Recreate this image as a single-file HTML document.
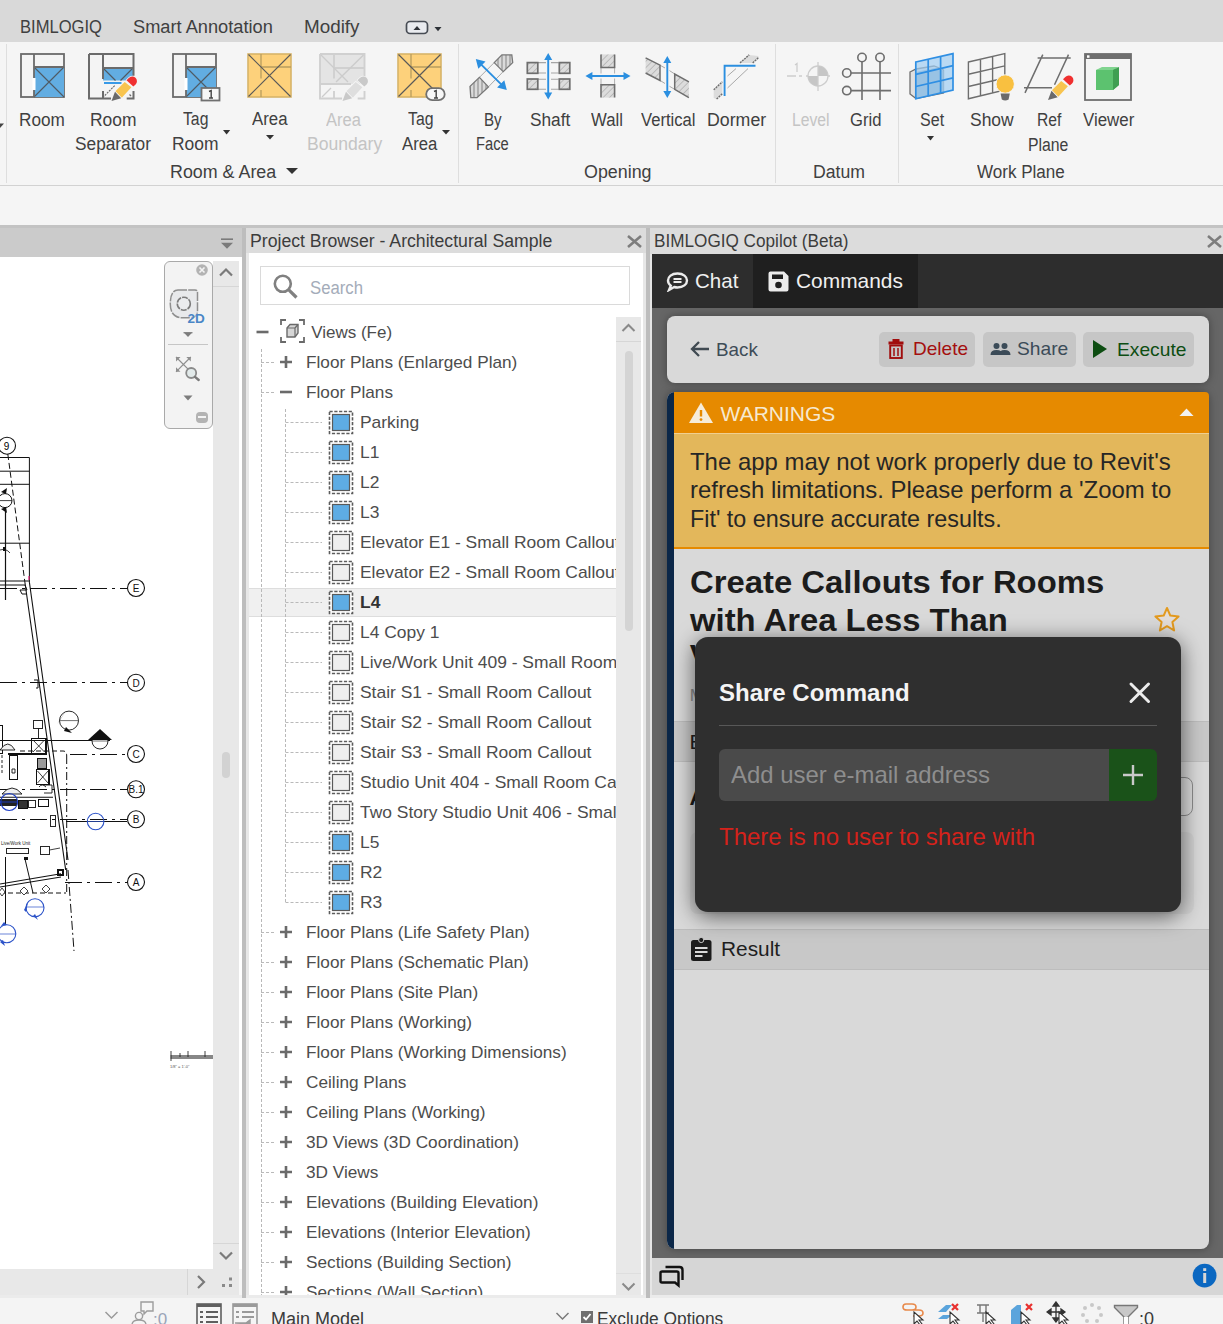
<!DOCTYPE html><html><head><meta charset="utf-8"><style>html,body{margin:0;padding:0}body{width:1223px;height:1324px;position:relative;overflow:hidden;background:#f5f5f5;font-family:'Liberation Sans',sans-serif}svg{display:block}</style></head><body><div style="position:absolute;left:0px;top:0px;width:1223px;height:42px;background:#d9d9d9;"></div>
<div style="position:absolute;left:19.60px;top:18.46px;font-size:18px;line-height:18px;color:#404040;font-weight:normal;white-space:nowrap;transform:scaleX(0.9212);transform-origin:left 0;">BIMLOGIQ</div>
<div style="position:absolute;left:132.50px;top:18.46px;font-size:18px;line-height:18px;color:#404040;font-weight:normal;white-space:nowrap;transform:scaleX(1.0124);transform-origin:left 0;">Smart Annotation</div>
<div style="position:absolute;left:303.50px;top:18.46px;font-size:18px;line-height:18px;color:#404040;font-weight:normal;white-space:nowrap;transform:scaleX(1.0469);transform-origin:left 0;">Modify</div>
<svg style="position:absolute;left:404px;top:19px;" width="40" height="18" viewBox="0 0 40 18"><rect x="2.5" y="2.5" width="21" height="12" rx="3.5" fill="#e9ebef" stroke="#474c54" stroke-width="1.7"/><path d="M9.5 11 L13 7 L16.5 11 Z" fill="#2e3238"/><path d="M30.5 8 L37.5 8 L34 12.2 Z" fill="#2e3238"/></svg>
<div style="position:absolute;left:0px;top:42px;width:1223px;height:143px;background:#f5f5f5;"></div>
<div style="position:absolute;left:0px;top:184.5px;width:1223px;height:1.5px;background:#d2d2d2;"></div>
<div style="position:absolute;left:6px;top:44px;width:1px;height:139px;background:#dedede;"></div>
<div style="position:absolute;left:458px;top:44px;width:1px;height:139px;background:#dedede;"></div>
<div style="position:absolute;left:774.5px;top:44px;width:1px;height:139px;background:#dedede;"></div>
<div style="position:absolute;left:898px;top:44px;width:1px;height:139px;background:#dedede;"></div>
<div style="position:absolute;left:19.40px;top:110.76px;font-size:18px;line-height:18px;color:#404040;font-weight:normal;white-space:nowrap;transform:scaleX(0.9539);transform-origin:left 0;">Room</div>
<div style="position:absolute;left:90.00px;top:110.76px;font-size:18px;line-height:18px;color:#404040;font-weight:normal;white-space:nowrap;transform:scaleX(0.9684);transform-origin:left 0;">Room</div>
<div style="position:absolute;left:74.60px;top:135.36px;font-size:18px;line-height:18px;color:#404040;font-weight:normal;white-space:nowrap;transform:scaleX(0.9600);transform-origin:left 0;">Separator</div>
<div style="position:absolute;left:183.00px;top:110.26px;font-size:18px;line-height:18px;color:#404040;font-weight:normal;white-space:nowrap;transform:scaleX(0.8749);transform-origin:left 0;">Tag</div>
<div style="position:absolute;left:172.00px;top:134.56px;font-size:18px;line-height:18px;color:#404040;font-weight:normal;white-space:nowrap;transform:scaleX(0.9684);transform-origin:left 0;">Room</div>
<div style="position:absolute;left:252.00px;top:110.26px;font-size:18px;line-height:18px;color:#404040;font-weight:normal;white-space:nowrap;transform:scaleX(0.9334);transform-origin:left 0;">Area</div>
<div style="position:absolute;left:326.40px;top:110.56px;font-size:18px;line-height:18px;color:#c4c4c4;font-weight:normal;white-space:nowrap;transform:scaleX(0.9177);transform-origin:left 0;">Area</div>
<div style="position:absolute;left:306.50px;top:135.26px;font-size:18px;line-height:18px;color:#c4c4c4;font-weight:normal;white-space:nowrap;transform:scaleX(0.9758);transform-origin:left 0;">Boundary</div>
<div style="position:absolute;left:407.50px;top:110.26px;font-size:18px;line-height:18px;color:#404040;font-weight:normal;white-space:nowrap;transform:scaleX(0.8784);transform-origin:left 0;">Tag</div>
<div style="position:absolute;left:402.20px;top:134.56px;font-size:18px;line-height:18px;color:#404040;font-weight:normal;white-space:nowrap;transform:scaleX(0.9282);transform-origin:left 0;">Area</div>
<div style="position:absolute;left:170.20px;top:163.26px;font-size:18px;line-height:18px;color:#404040;font-weight:normal;white-space:nowrap;transform:scaleX(0.9919);transform-origin:left 0;">Room &amp; Area</div>
<div style="position:absolute;left:484.20px;top:110.76px;font-size:18px;line-height:18px;color:#404040;font-weight:normal;white-space:nowrap;transform:scaleX(0.8422);transform-origin:left 0;">By</div>
<div style="position:absolute;left:476.00px;top:135.26px;font-size:18px;line-height:18px;color:#404040;font-weight:normal;white-space:nowrap;transform:scaleX(0.8169);transform-origin:left 0;">Face</div>
<div style="position:absolute;left:529.60px;top:110.76px;font-size:18px;line-height:18px;color:#404040;font-weight:normal;white-space:nowrap;transform:scaleX(0.9588);transform-origin:left 0;">Shaft</div>
<div style="position:absolute;left:591.40px;top:110.76px;font-size:18px;line-height:18px;color:#404040;font-weight:normal;white-space:nowrap;transform:scaleX(0.9288);transform-origin:left 0;">Wall</div>
<div style="position:absolute;left:640.80px;top:110.76px;font-size:18px;line-height:18px;color:#404040;font-weight:normal;white-space:nowrap;transform:scaleX(0.9232);transform-origin:left 0;">Vertical</div>
<div style="position:absolute;left:707.20px;top:110.76px;font-size:18px;line-height:18px;color:#404040;font-weight:normal;white-space:nowrap;transform:scaleX(0.9864);transform-origin:left 0;">Dormer</div>
<div style="position:absolute;left:583.60px;top:163.46px;font-size:18px;line-height:18px;color:#404040;font-weight:normal;white-space:nowrap;transform:scaleX(0.9917);transform-origin:left 0;">Opening</div>
<div style="position:absolute;left:791.60px;top:110.76px;font-size:18px;line-height:18px;color:#c4c4c4;font-weight:normal;white-space:nowrap;transform:scaleX(0.8738);transform-origin:left 0;">Level</div>
<div style="position:absolute;left:849.80px;top:110.76px;font-size:18px;line-height:18px;color:#404040;font-weight:normal;white-space:nowrap;transform:scaleX(0.9231);transform-origin:left 0;">Grid</div>
<div style="position:absolute;left:812.50px;top:163.46px;font-size:18px;line-height:18px;color:#404040;font-weight:normal;white-space:nowrap;transform:scaleX(0.9808);transform-origin:left 0;">Datum</div>
<div style="position:absolute;left:919.60px;top:110.76px;font-size:18px;line-height:18px;color:#404040;font-weight:normal;white-space:nowrap;transform:scaleX(0.8916);transform-origin:left 0;">Set</div>
<div style="position:absolute;left:970.30px;top:110.76px;font-size:18px;line-height:18px;color:#404040;font-weight:normal;white-space:nowrap;transform:scaleX(0.9704);transform-origin:left 0;">Show</div>
<div style="position:absolute;left:1036.50px;top:110.76px;font-size:18px;line-height:18px;color:#404040;font-weight:normal;white-space:nowrap;transform:scaleX(0.8709);transform-origin:left 0;">Ref</div>
<div style="position:absolute;left:1028.00px;top:135.76px;font-size:18px;line-height:18px;color:#404040;font-weight:normal;white-space:nowrap;transform:scaleX(0.8774);transform-origin:left 0;">Plane</div>
<div style="position:absolute;left:1082.50px;top:110.76px;font-size:18px;line-height:18px;color:#404040;font-weight:normal;white-space:nowrap;transform:scaleX(0.9378);transform-origin:left 0;">Viewer</div>
<div style="position:absolute;left:976.70px;top:163.06px;font-size:18px;line-height:18px;color:#404040;font-weight:normal;white-space:nowrap;transform:scaleX(0.9469);transform-origin:left 0;">Work Plane</div>
<svg style="position:absolute;left:222px;top:129px;" width="9" height="6" viewBox="0 0 9 6"><path d="M1 1 L8.2 1 L4.6 5.5 Z" fill="#333"/></svg>
<svg style="position:absolute;left:265px;top:134px;" width="10" height="6" viewBox="0 0 10 6"><path d="M1 1 L9.0 1 L5.0 5.5 Z" fill="#333"/></svg>
<svg style="position:absolute;left:441px;top:129px;" width="10" height="6" viewBox="0 0 10 6"><path d="M1 1 L9.0 1 L5.0 5.5 Z" fill="#333"/></svg>
<svg style="position:absolute;left:285px;top:167px;" width="14" height="8" viewBox="0 0 14 8"><path d="M1 1 L13.0 1 L7.0 7.0 Z" fill="#333"/></svg>
<svg style="position:absolute;left:926px;top:135px;" width="9" height="6" viewBox="0 0 9 6"><path d="M1 1 L8.0 1 L4.5 5.5 Z" fill="#333"/></svg>
<div style="position:absolute;left:0px;top:186px;width:1223px;height:39px;background:#f5f5f5;"></div>
<svg style="position:absolute;left:20px;top:53px;" width="46" height="46" viewBox="0 0 46 46"><rect x="1" y="1" width="43" height="43" fill="#f4f4f4" stroke="#6b6b6b" stroke-width="1.8"/><rect x="14" y="14" width="30" height="30" fill="#62ade2"/><path d="M14 14 L44 44 M44 14 L14 44" stroke="#4f5a63" stroke-width="1.1"/><path d="M14 1 V44 M14 14 H44" stroke="#6b6b6b" stroke-width="1.8"/><rect x="12.5" y="25" width="3" height="12" fill="#ffffff"/></svg>
<svg style="position:absolute;left:88px;top:53px;" width="50" height="50" viewBox="0 0 50 50"><rect x="1" y="1" width="44.5" height="44.5" fill="#f4f4f4"/><rect x="15" y="15" width="30" height="12.5" fill="#62ade2"/><path d="M15 15 L27.5 27.5 M45 15 L32.5 27.5" stroke="#4f5a63" stroke-width="1.2"/><path d="M1 1 H45.5 V22.7 M45.5 38 V45.5 H38.7 M23 45.5 H1 V1 M15 1 V26 M15 38 V45.5 M15 15 H45.5" stroke="#6b6b6b" stroke-width="2" fill="none"/><path d="M16 30 H33.5" stroke="#2f95e6" stroke-width="1.9"/><path d="M26.7 32.6 L15 44.3" stroke="#6a6a6a" stroke-width="1.1" stroke-dasharray="2 1"/><path d="M41.5 41.5 L43 43" stroke="#6a6a6a" stroke-width="1.2"/><path d="M27.4 38.2 L36.7 28.9 L43.4 34.3 L33.8 44.8 Z" fill="#f8c44f" stroke="#f5f5f5" stroke-width="1.6" paint-order="stroke"/><path d="M38.5 27.2 L40.8 24.9 A4.6 4.6 0 0 1 47.6 31.5 L45.3 33.6 Z" fill="#f03030" stroke="#f5f5f5" stroke-width="1.4" paint-order="stroke"/><path d="M27 38.8 L33.2 45.3 L23.5 48 Z" fill="#6a6a6a" stroke="#f5f5f5" stroke-width="1.2" paint-order="stroke"/></svg>
<svg style="position:absolute;left:172px;top:53px;" width="50" height="49" viewBox="0 0 50 49"><rect x="1" y="1" width="43" height="43" fill="#f4f4f4" stroke="#6b6b6b" stroke-width="1.8"/><rect x="14" y="14" width="30" height="30" fill="#62ade2"/><path d="M14 14 L44 44 M44 14 L14 44" stroke="#4f5a63" stroke-width="1.1"/><path d="M14 1 V44 M14 14 H44" stroke="#6b6b6b" stroke-width="1.8"/><rect x="12.5" y="25" width="3" height="12" fill="#ffffff"/><rect x="29.5" y="35" width="18" height="12.5" fill="#f7f7f7" stroke="#707070" stroke-width="1.8"/><path d="M37 38.5 L39.2 37.5 V45 M37 45 H41" stroke="#444" stroke-width="1.4" fill="none"/></svg>
<svg style="position:absolute;left:247px;top:53px;" width="46" height="46" viewBox="0 0 46 46"><rect x="1" y="1" width="43" height="43" fill="#fdd17b" stroke="#d8b56a" stroke-width="1.6"/><path d="M14 1 V25.5 M14 37 V44 M14 14 H44" stroke="#b89d5f" stroke-width="1.3"/><path d="M1.5 1.5 L43.5 43.5 M43.5 1.5 L1.5 43.5" stroke="#5a5a5a" stroke-width="1.15"/></svg>
<svg style="position:absolute;left:319px;top:53px;" width="50" height="50" viewBox="0 0 50 50"><rect x="1" y="1" width="44.5" height="30" fill="#e4e4e4"/><rect x="1" y="31" width="44.5" height="14.5" fill="#f4f4f4"/><path d="M1 1 H45.5 V27 M45.5 38 V45.5 H38.7 M23 45.5 H1 V1 M15 1 V25.5 M15 15 H45.5 M1 31 H32 M15 38 V45.5" stroke="#d0d0d0" stroke-width="1.9" fill="none"/><path d="M2 2 L29 29 M44.5 2 L17 29" stroke="#cccccc" stroke-width="1.4"/><path d="M12 35 L3 44" stroke="#cccccc" stroke-width="1.3"/><path d="M27.4 38.2 L36.7 28.9 L43.4 34.3 L33.8 44.8 Z" fill="#dedede" stroke="#f5f5f5" stroke-width="1.6" paint-order="stroke"/><path d="M38.5 27.2 L40.8 24.9 A4.6 4.6 0 0 1 47.6 31.5 L45.3 33.6 Z" fill="#c9c9c9" stroke="#f5f5f5" stroke-width="1.4" paint-order="stroke"/><path d="M27 38.8 L33.2 45.3 L23.5 48 Z" fill="#c9c9c9" stroke="#f5f5f5" stroke-width="1.2" paint-order="stroke"/></svg>
<svg style="position:absolute;left:397px;top:53px;" width="50" height="49" viewBox="0 0 50 49"><rect x="1" y="1" width="43" height="43" fill="#fdd17b" stroke="#d8b56a" stroke-width="1.6"/><path d="M14 1 V25.5 M14 37 V44 M14 14 H44" stroke="#b89d5f" stroke-width="1.3"/><path d="M1.5 1.5 L43.5 43.5 M43.5 1.5 L1.5 43.5" stroke="#5a5a5a" stroke-width="1.15"/><rect x="29.2" y="35.2" width="18.5" height="12" rx="6" fill="#f7f7f7" stroke="#707070" stroke-width="1.8"/><path d="M37 38.5 L39.2 37.5 V45 M37 45 H41" stroke="#444" stroke-width="1.4" fill="none"/></svg>
<svg style="position:absolute;left:466px;top:52px;" width="50" height="49" viewBox="466 52 50 49"><defs><pattern id="hv" width="4" height="4" patternUnits="userSpaceOnUse"><rect width="4" height="4" fill="#dadada"/><path d="M2 0 V4" stroke="#8c8c8c" stroke-width="1.1"/></pattern><pattern id="hd" width="4.5" height="4.5" patternUnits="userSpaceOnUse" patternTransform="rotate(45)"><rect width="4.5" height="4.5" fill="#dcdcdc"/><path d="M0 0 V4.5" stroke="#9a9a9a" stroke-width="1"/></pattern></defs><path d="M479.4 77.4 L494.2 62.6 M488.4 86.9 L503.2 71.6" stroke="#a8a8a8" stroke-width="1"/><path d="M470 86.4 L479.4 77.4 L488.4 86.9 L477 97.7 L470.8 97.7 Z" fill="url(#hv)" stroke="#777" stroke-width="1.3"/><path d="M494.2 62.6 L501.9 54.9 L511.8 54.9 L512.7 62.6 L503.2 71.6 Z" fill="url(#hv)" stroke="#777" stroke-width="1.3"/><path d="M478.5 61.8 L504 87.2" stroke="#2b8fe0" stroke-width="1.9"/><path d="M475.8 59 L485.5 61.5 L478.3 68.7 Z M506.8 90 L497.1 87.5 L504.3 80.3 Z" fill="#2b8fe0"/></svg>
<svg style="position:absolute;left:524px;top:51px;" width="48" height="51" viewBox="524 51 48 51"><defs><pattern id="hv" width="4" height="4" patternUnits="userSpaceOnUse"><rect width="4" height="4" fill="#dadada"/><path d="M2 0 V4" stroke="#8c8c8c" stroke-width="1.1"/></pattern><pattern id="hd" width="4.5" height="4.5" patternUnits="userSpaceOnUse" patternTransform="rotate(45)"><rect width="4.5" height="4.5" fill="#dcdcdc"/><path d="M0 0 V4.5" stroke="#9a9a9a" stroke-width="1"/></pattern></defs><path d="M538 62.6 H546 M551 62.6 H558.6 M538 73 H546 M551 73 H558.6 M538 79.3 H546 M551 79.3 H558.6 M538 89.2 H546 M551 89.2 H558.6" stroke="#a5a5a5" stroke-width="1.1"/><rect x="527.3" y="62.6" width="10.5" height="10.7" fill="url(#hd)" stroke="#6e6e6e" stroke-width="1.7"/><rect x="559.3" y="62.6" width="10.5" height="10.7" fill="url(#hd)" stroke="#6e6e6e" stroke-width="1.7"/><rect x="527.3" y="79" width="10.5" height="10.3" fill="url(#hd)" stroke="#6e6e6e" stroke-width="1.7"/><rect x="559.3" y="79" width="10.5" height="10.3" fill="url(#hd)" stroke="#6e6e6e" stroke-width="1.7"/><path d="M548.2 58 V95" stroke="#2b8fe0" stroke-width="1.9"/><path d="M548.2 53 L552.2 60 L544.2 60 Z M548.2 99.5 L552.2 92.5 L544.2 92.5 Z" fill="#2b8fe0"/></svg>
<svg style="position:absolute;left:583px;top:52px;" width="49" height="48" viewBox="583 52 49 48"><defs><pattern id="hv" width="4" height="4" patternUnits="userSpaceOnUse"><rect width="4" height="4" fill="#dadada"/><path d="M2 0 V4" stroke="#8c8c8c" stroke-width="1.1"/></pattern><pattern id="hd" width="4.5" height="4.5" patternUnits="userSpaceOnUse" patternTransform="rotate(45)"><rect width="4.5" height="4.5" fill="#dcdcdc"/><path d="M0 0 V4.5" stroke="#9a9a9a" stroke-width="1"/></pattern></defs><path d="M601 67.5 V84.8 M614.6 67.5 V84.8" stroke="#b0b0b0" stroke-width="1"/><rect x="601" y="54.4" width="13.6" height="13.1" fill="url(#hd)"/><path d="M601 54.4 V67.5 H614.6 V54.4" stroke="#6e6e6e" stroke-width="1.6" fill="none"/><rect x="601" y="84.8" width="13.6" height="12.8" fill="url(#hd)"/><path d="M601 97.6 V84.8 H614.6 V97.6" stroke="#6e6e6e" stroke-width="1.6" fill="none"/><rect x="596" y="73.5" width="24" height="5" fill="#f5f5f5"/><path d="M590 76 H626" stroke="#2b8fe0" stroke-width="1.9"/><path d="M585.4 76 L592.4 72 L592.4 80 Z M630.5 76 L623.5 72 L623.5 80 Z" fill="#2b8fe0"/></svg>
<svg style="position:absolute;left:643px;top:53px;" width="48" height="48" viewBox="643 53 48 48"><defs><pattern id="hv" width="4" height="4" patternUnits="userSpaceOnUse"><rect width="4" height="4" fill="#dadada"/><path d="M2 0 V4" stroke="#8c8c8c" stroke-width="1.1"/></pattern><pattern id="hd" width="4.5" height="4.5" patternUnits="userSpaceOnUse" patternTransform="rotate(45)"><rect width="4.5" height="4.5" fill="#dcdcdc"/><path d="M0 0 V4.5" stroke="#9a9a9a" stroke-width="1"/></pattern></defs><path d="M660 65.2 L665 68 M669.5 70.6 L674.7 74 M660 80.4 L665 83.5 M669.5 86.3 L674.7 89.3" stroke="#a8a8a8" stroke-width="1"/><path d="M645.6 57.9 L660 65.2 L660 80.4 L645.6 73 Z" fill="url(#hd)"/><path d="M645.6 57.9 L660 65.2 L660 80.4 L645.6 73" stroke="#6e6e6e" stroke-width="1.5" fill="none"/><path d="M674.7 74 L688.9 81.9 L688.9 97.6 L674.7 89.3 Z" fill="url(#hd)"/><path d="M688.9 81.9 L674.7 74 L674.7 89.3 L688.9 97.6" stroke="#6e6e6e" stroke-width="1.5" fill="none"/><path d="M667.3 60 V94" stroke="#2b8fe0" stroke-width="1.9"/><path d="M667.3 55.9 L671.3 62.9 L663.3 62.9 Z M667.3 98 L671.3 91 L663.3 91 Z" fill="#2b8fe0"/></svg>
<svg style="position:absolute;left:710px;top:52px;" width="52" height="50" viewBox="710 52 52 50"><path d="M740 62.9 L749.2 54.9 L758.4 56 L758.4 57.7 L752.7 62.9 Z" fill="#dcdcdc"/><path d="M740 62.9 L749.2 54.9 M752.7 62.9 L758.4 57.7" stroke="#6e6e6e" stroke-width="1.4" stroke-dasharray="2 0.8"/><path d="M727.5 76 L736 68.6 M727.5 88 L748 68.6" stroke="#a8a8a8" stroke-width="1"/><path d="M713.7 89.8 L722.3 81.8 L722.3 93.8 L716.6 99 L713.7 98 Z" fill="#dcdcdc"/><path d="M713.7 89.8 L722.3 81.8 M716.6 99 L722.3 93.8" stroke="#6e6e6e" stroke-width="1.4" stroke-dasharray="2 0.8"/><path d="M724.6 96 V65.7 H755.5" stroke="#2b8fe0" stroke-width="1.9" fill="none"/></svg>
<svg style="position:absolute;left:786px;top:61px;" width="48" height="31" viewBox="0 0 48 31"><path d="M1 15 H10 M13 15 H16 M20 15 H44" stroke="#cdcdcd" stroke-width="1.3"/><path d="M9 4 L11 2.5 V11" stroke="#cdcdcd" stroke-width="1.3" fill="none"/><circle cx="32" cy="15" r="10" fill="#f5f5f5" stroke="#cdcdcd" stroke-width="1.3"/><path d="M32 5 A10 10 0 0 1 42 15 H32 Z M32 25 A10 10 0 0 1 22 15 H32 Z" fill="#c6c6c6"/><path d="M32 1 V30" stroke="#cdcdcd" stroke-width="1.3"/></svg>
<svg style="position:absolute;left:841px;top:52px;" width="50" height="50" viewBox="0 0 50 50"><path d="M21 8.5 V48 M39 8.5 V48 M10 21 H50 M10 38.6 H50" stroke="#6e6e6e" stroke-width="1.6"/><circle cx="21" cy="5.5" r="4.2" fill="#f5f5f5" stroke="#6e6e6e" stroke-width="1.6"/><circle cx="39" cy="5.5" r="4.2" fill="#f5f5f5" stroke="#6e6e6e" stroke-width="1.6"/><circle cx="5.8" cy="21" r="4.2" fill="#f5f5f5" stroke="#6e6e6e" stroke-width="1.6"/><circle cx="5.8" cy="38.6" r="4.2" fill="#f5f5f5" stroke="#6e6e6e" stroke-width="1.6"/></svg>
<svg style="position:absolute;left:906px;top:51px;" width="50" height="51" viewBox="906 51 50 51"><path d="M910 72 L916 69 L934 66 L942 69 L943.5 70 V93 L916 98.5 L910 94 Z" fill="#e0e0e0" stroke="#707070" stroke-width="1.3"/><path d="M916 72 L935 68 L943.5 70.5 V92 L916 98 Z" fill="#8aaac4"/><path d="M915.8 62 L953 53.6 V90 L915.8 98.8 Z" fill="#9fcdf2" fill-opacity="0.7" stroke="#2f8fe3" stroke-width="1.7"/><path d="M928.2 59.2 V95.8 M940.6 56.4 V93 M915.8 74.3 L953 65.7 M915.8 86.5 L953 77.9" stroke="#2f8fe3" stroke-width="1.7"/></svg>
<svg style="position:absolute;left:966px;top:51px;" width="50" height="51" viewBox="966 51 50 51"><path d="M968.4 62 L1004.8 53.6 V90 L968.4 98.8 Z M980.5 59.2 V96 M992.6 56.4 V93 M968.4 74.3 L1004.8 65.9 M968.4 86.5 L1004.8 78" stroke="#6e6e6e" stroke-width="1.4" fill="none"/><circle cx="1005.2" cy="84" r="9.2" fill="#f9c040" stroke="#f5f5f5" stroke-width="1"/><path d="M1000.6 93.6 H1009.8 L1008.6 99.5 Q1005.2 101.5 1001.8 99.5 Z" fill="#6a6a6a"/></svg>
<svg style="position:absolute;left:1022px;top:51px;" width="52" height="52" viewBox="1022 51 52 52"><path d="M1037.6 58 H1070.7 M1024 87.7 H1052 M1042.8 54.6 L1025 92.9 M1068.5 54.6 L1054.5 84.8" stroke="#6e6e6e" stroke-width="1.5" fill="none"/><g transform="translate(1024.5,52)"><path d="M27.4 38.2 L36.7 28.9 L43.4 34.3 L33.8 44.8 Z" fill="#f8c44f" stroke="#f5f5f5" stroke-width="1.6" paint-order="stroke"/><path d="M38.5 27.2 L40.8 24.9 A4.6 4.6 0 0 1 47.6 31.5 L45.3 33.6 Z" fill="#f03030" stroke="#f5f5f5" stroke-width="1.4" paint-order="stroke"/><path d="M27 38.8 L33.2 45.3 L23.5 48 Z" fill="#6a6a6a" stroke="#f5f5f5" stroke-width="1.2" paint-order="stroke"/></g></svg>
<svg style="position:absolute;left:1083px;top:52px;" width="50" height="50" viewBox="0 0 50 50"><rect x="2" y="2" width="46" height="46" fill="#f4f4f4" stroke="#6e6e6e" stroke-width="1.8"/><rect x="2" y="2" width="46" height="5" fill="#6e6e6e"/><rect x="4" y="3.3" width="2.5" height="2.5" fill="#fff"/><path d="M13 18 L30 15 L36 18 L36 33 L30 38 L13 38 Z" fill="#5cc26f"/><path d="M13 18 L19 15 L36 15 L30 18 Z" fill="#80d48f"/><path d="M30 18 L36 15 V33 L30 38 Z" fill="#3f9f52"/></svg>
<svg style="position:absolute;left:0px;top:123px;" width="5" height="6" viewBox="0 0 5 6"><path d="M-4 0.5 L4 0.5 L0 5 Z" fill="#444"/></svg>
<div style="position:absolute;left:0px;top:225px;width:1223px;height:3px;background:#c3c3c3;"></div>
<div style="position:absolute;left:0px;top:228px;width:242px;height:29px;background:#cbcbcb;"></div>
<svg style="position:absolute;left:220px;top:237px;" width="15" height="13" viewBox="0 0 15 13"><path d="M1 2.2 H13" stroke="#7b7b7b" stroke-width="1.6"/><path d="M1 5.8 H13 L7 11.8 Z" fill="#7b7b7b"/></svg>
<div style="position:absolute;left:242px;top:228px;width:3.5px;height:1068px;background:#bdbdbd;"></div>
<div style="position:absolute;left:0px;top:257px;width:242px;height:1012px;background:#ffffff;"></div>
<div style="position:absolute;left:213px;top:261px;width:26px;height:1008px;background:#e8e8e8;"></div>
<div style="position:absolute;left:213px;top:286px;width:26px;height:1px;background:#d6d6d6;"></div>
<svg style="position:absolute;left:218px;top:266px;" width="16" height="12" viewBox="0 0 16 12"><path d="M2 9.5 L8 3.5 L14 9.5" stroke="#7a7a7a" stroke-width="2.2" fill="none"/></svg>
<div style="position:absolute;left:213px;top:1243px;width:26px;height:1px;background:#d6d6d6;"></div>
<svg style="position:absolute;left:218px;top:1250px;" width="16" height="12" viewBox="0 0 16 12"><path d="M2 2.5 L8 8.5 L14 2.5" stroke="#7a7a7a" stroke-width="2.2" fill="none"/></svg>
<div style="position:absolute;left:222px;top:752px;width:8px;height:26px;background:#d2d2d2;border-radius:4px;"></div>
<div style="position:absolute;left:0px;top:1269px;width:239px;height:26px;background:#e8e8e8;"></div>
<div style="position:absolute;left:187px;top:1269px;width:1px;height:26px;background:#d6d6d6;"></div>
<svg style="position:absolute;left:195px;top:1274px;" width="12" height="16" viewBox="0 0 12 16"><path d="M3 2 L9 8 L3 14" stroke="#7a7a7a" stroke-width="2.2" fill="none"/></svg>
<svg style="position:absolute;left:221px;top:1277px;" width="14" height="12" viewBox="0 0 14 12"><rect x="8" y="0.5" width="3" height="3" fill="#8a8a8a"/><rect x="1" y="7" width="3" height="3" fill="#8a8a8a"/><rect x="8" y="7" width="3" height="3" fill="#8a8a8a"/></svg>
<div style="position:absolute;left:163.5px;top:261px;width:47px;height:166px;border:1.5px solid #a9a9a9;border-radius:6px;background:#f3f3f3"></div>
<svg style="position:absolute;left:195px;top:263px;" width="14" height="14" viewBox="0 0 14 14"><circle cx="7" cy="7" r="5.8" fill="#b3b3b3"/><path d="M4.5 4.5 L9.5 9.5 M9.5 4.5 L4.5 9.5" stroke="#f3f3f3" stroke-width="1.6"/></svg>
<svg style="position:absolute;left:166px;top:286px;" width="44" height="40" viewBox="166 286 44 40"><path d="M178 290 H195 Q197.5 290 197.5 292.5 V311 Q197.5 317.8 190 317.8 H183 Q170.3 317.8 170.3 304 Q170.3 290 178 290 Z" fill="#e8e9eb" stroke="#8f8f8f" stroke-width="1.5" stroke-dasharray="9 1.2"/><circle cx="183.8" cy="303.7" r="6.5" fill="#ebecee" stroke="#7c7c7c" stroke-width="1.6" stroke-dasharray="6 1"/><text x="187.6" y="322.8" font-family="Liberation Sans" font-weight="bold" font-size="13.5" fill="#4a86c6" stroke="#f3f3f3" stroke-width="0.6" paint-order="stroke">2D</text></svg>
<svg style="position:absolute;left:183px;top:332px;" width="10" height="6" viewBox="0 0 10 6"><path d="M1 0.8 H9 L5 5 Z" fill="#7d7d7d"/><path d="M0.5 0.7 H9.5" stroke="#7d7d7d" stroke-width="1.2"/></svg>
<div style="position:absolute;left:168px;top:344px;width:40px;height:1px;background:#c6c6c6;"></div>
<svg style="position:absolute;left:174px;top:355px;" width="28" height="28" viewBox="174 355 28 28"><path d="M176 357 L190.8 371.8 M190.8 357 L176 371.8" stroke="#8f8f8f" stroke-width="1.2"/><path d="M176 357 H180.5 L176 361.5 Z M190.8 357 H186.3 L190.8 361.5 Z M176 371.8 H180.5 L176 367.3 Z" fill="#8f8f8f"/><circle cx="191.2" cy="373" r="5" fill="#e2eaea" stroke="#8a8a8a" stroke-width="1.8"/><path d="M195 376.8 L198.7 380" stroke="#7a7a7a" stroke-width="2.4" stroke-linecap="round"/></svg>
<svg style="position:absolute;left:183px;top:395px;" width="10" height="6" viewBox="0 0 10 6"><path d="M0.5 0.5 H9.5 L5 5.5 Z" fill="#7d7d7d"/></svg>
<svg style="position:absolute;left:195px;top:411px;" width="14" height="13" viewBox="0 0 14 13"><rect x="1" y="1" width="12" height="11" rx="4" fill="#b3b3b3"/><rect x="3" y="5" width="8" height="2" fill="#f3f3f3"/></svg>
<div style="position:absolute;left:245.5px;top:228px;width:400.5px;height:25px;background:#dcdcdc;"></div>
<div style="position:absolute;left:250.20px;top:231.96px;font-size:18px;line-height:18px;color:#3c3c3c;font-weight:normal;white-space:nowrap;transform:scaleX(0.9811);transform-origin:left 0;">Project Browser - Architectural Sample</div>
<svg style="position:absolute;left:626px;top:234px;" width="17" height="15" viewBox="0 0 17 15"><path d="M2 2 L15 13 M15 2 L2 13" stroke="#7d7d7d" stroke-width="2.6"/></svg>
<div style="position:absolute;left:245.5px;top:253px;width:3px;height:1043px;background:#e7e7e7;"></div>
<div style="position:absolute;left:248.5px;top:253px;width:394.5px;height:1043px;background:#ffffff;"></div>
<div style="position:absolute;left:643px;top:253px;width:3px;height:1043px;background:#e7e7e7;"></div>
<div style="position:absolute;left:646px;top:228px;width:3.5px;height:1068px;background:#bdbdbd;"></div>
<div style="position:absolute;left:260px;top:266px;width:368px;height:37px;border:1px solid #dadada;background:#fff"></div>
<svg style="position:absolute;left:272px;top:273px;" width="28" height="28" viewBox="0 0 28 28"><circle cx="10.8" cy="10.8" r="8" fill="none" stroke="#808080" stroke-width="2.6"/><path d="M16.8 16.8 L24.5 24.5" stroke="#808080" stroke-width="3.2"/></svg>
<div style="position:absolute;left:310.00px;top:278.76px;font-size:18px;line-height:18px;color:#a4acb9;font-weight:normal;white-space:nowrap;transform:scaleX(0.9291);transform-origin:left 0;">Search</div>
<div style="position:absolute;left:616px;top:317px;width:25px;height:979px;background:#e8e8e8;"></div>
<div style="position:absolute;left:616px;top:341px;width:25px;height:1px;background:#d6d6d6;"></div>
<svg style="position:absolute;left:620px;top:322px;" width="17" height="12" viewBox="0 0 17 12"><path d="M2.5 9 L8.5 3 L14.5 9" stroke="#8a8a8a" stroke-width="2" fill="none"/></svg>
<div style="position:absolute;left:625px;top:351px;width:7.5px;height:280px;background:#d4d4d4;border-radius:4px;"></div>
<div style="position:absolute;left:616px;top:1273px;width:25px;height:1px;background:#dedede;"></div>
<svg style="position:absolute;left:620px;top:1281px;" width="17" height="12" viewBox="0 0 17 12"><path d="M2.5 2.5 L8.5 8.5 L14.5 2.5" stroke="#8a8a8a" stroke-width="2" fill="none"/></svg>
<div style="position:absolute;left:649.5px;top:228px;width:573.5px;height:25.5px;background:#dcdcdc;"></div>
<div style="position:absolute;left:654.30px;top:231.96px;font-size:18px;line-height:18px;color:#3c3c3c;font-weight:normal;white-space:nowrap;transform:scaleX(0.9531);transform-origin:left 0;">BIMLOGIQ Copilot (Beta)</div>
<svg style="position:absolute;left:1206px;top:234px;" width="17" height="15" viewBox="0 0 17 15"><path d="M2 2 L15 13 M15 2 L2 13" stroke="#7d7d7d" stroke-width="2.6"/></svg>
<div style="position:absolute;left:649.5px;top:253.5px;width:2.5px;height:1042.5px;background:#e6e6e6;"></div>
<div style="position:absolute;left:652px;top:254px;width:571px;height:54px;background:#2d2d2d;"></div>
<div style="position:absolute;left:753px;top:254px;width:165px;height:54px;background:#1f1f1f;"></div>
<div style="position:absolute;left:652px;top:308px;width:571px;height:950px;background:#666666;"></div>
<div style="position:absolute;left:652px;top:1258px;width:571px;height:37px;background:#d6d6d6;"></div>
<svg style="position:absolute;left:0px;top:257px;overflow:hidden" width="213" height="1012" viewBox="0 257 213 1012"><circle cx="7" cy="445.7" r="8.5" fill="#fff" stroke="#111" stroke-width="1.1"/><text x="6.5" y="449.5" font-family="Liberation Sans" font-size="10" text-anchor="middle">9</text><path d="M0 457.5 H29.4 V583 M0 471.2 H29.4 M0 484.3 H29.4 M0 543.2 H29.4 M0 581 H29.4" stroke="#111" stroke-width="1" fill="none"/><path d="M7.8 454 L25 583" stroke="#111" stroke-width="1" stroke-dasharray="6 3" fill="none"/><path d="M5.5 508 V600" stroke="#111" stroke-width="1.2"/><circle cx="5" cy="500.6" r="7" fill="#fff" stroke="#111" stroke-width="1"/><path d="M0 500.6 H12" stroke="#111" stroke-width="0.8"/><path d="M1 492 L7 488 L6 494 Z M1 509 L7 513 L6 507 Z" fill="#111"/><path d="M29 576 V580" stroke="#e0207a" stroke-width="1.2"/><path d="M0 550 Q6 548 10 553" stroke="#111" stroke-width="0.8" fill="none"/><rect shape-rendering="crispEdges" x="3" y="547" width="3" height="4" fill="#111"/><path d="M0 588 H127.5" stroke="#111" stroke-width="1" stroke-dasharray="17 5 3 5" shape-rendering="crispEdges"/><circle cx="136" cy="588" r="8.5" fill="#fff" stroke="#111" stroke-width="1.1"/><text x="136" y="591.8" font-family="Liberation Sans" font-size="10" text-anchor="middle" fill="#111">E</text><path d="M0 682.7 H127.5" stroke="#111" stroke-width="1" stroke-dasharray="17 5 3 5" shape-rendering="crispEdges"/><circle cx="136" cy="682.7" r="8.5" fill="#fff" stroke="#111" stroke-width="1.1"/><text x="136" y="686.5" font-family="Liberation Sans" font-size="10" text-anchor="middle" fill="#111">D</text><path d="M70 754 H127.5" stroke="#111" stroke-width="1" stroke-dasharray="17 5 3 5" shape-rendering="crispEdges"/><circle cx="136" cy="754" r="8.5" fill="#fff" stroke="#111" stroke-width="1.1"/><text x="136" y="757.8" font-family="Liberation Sans" font-size="10" text-anchor="middle" fill="#111">C</text><path d="M0 789.3 H127.5" stroke="#111" stroke-width="1" stroke-dasharray="17 5 3 5" shape-rendering="crispEdges"/><circle cx="136" cy="789.3" r="8.5" fill="#fff" stroke="#111" stroke-width="1.1"/><text x="136" y="793.0999999999999" font-family="Liberation Sans" font-size="10" text-anchor="middle" fill="#111">B.1</text><path d="M0 819.3 H127.5" stroke="#111" stroke-width="1" stroke-dasharray="17 5 3 5" shape-rendering="crispEdges"/><circle cx="136" cy="819.3" r="8.5" fill="#fff" stroke="#111" stroke-width="1.1"/><text x="136" y="823.0999999999999" font-family="Liberation Sans" font-size="10" text-anchor="middle" fill="#111">B</text><path d="M66 821.5 H127" stroke="#111" stroke-width="1"/><path d="M65 882 H127.5" stroke="#111" stroke-width="1" stroke-dasharray="17 5 3 5" shape-rendering="crispEdges"/><circle cx="136" cy="882" r="8.5" fill="#fff" stroke="#111" stroke-width="1.1"/><text x="136" y="885.8" font-family="Liberation Sans" font-size="10" text-anchor="middle" fill="#111">A</text><path d="M25 583 L65.7 870 M29.5 583 L68 860" stroke="#111" stroke-width="1.1" fill="none"/><path d="M0 585 H25 L27 590 H20 L22 594 H27" stroke="#111" stroke-width="1" fill="none"/><path d="M68 870 L74 951" stroke="#111" stroke-width="1" stroke-dasharray="9 3 2 3" fill="none"/><path d="M34 680 H38 V688 H36" stroke="#111" stroke-width="1" fill="none"/><path d="M0 884 L61 873.7 M0 887 L61 877" stroke="#111" stroke-width="1.1" fill="none"/><path d="M0 893 H66" stroke="#111" stroke-width="1" stroke-dasharray="5 3" fill="none"/><path d="M66.7 756 V893" stroke="#111" stroke-width="1" stroke-dasharray="8 3 2 3" fill="none"/><path d="M20 751 H63 Q66.7 751 66.7 756" stroke="#111" stroke-width="1" stroke-dasharray="5 3" fill="none"/><path shape-rendering="crispEdges" d="M0 740.2 H110" stroke="#111" stroke-width="1.1" fill="none"/><path d="M8 754 H42" stroke="#111" stroke-width="2" fill="none"/><rect shape-rendering="crispEdges" x="31.4" y="738.3" width="14.7" height="15.7" fill="none" stroke="#111" stroke-width="1.2"/><path d="M33 740 L44.5 752 M44.5 740 L33 752" stroke="#111" stroke-width="0.8"/><rect shape-rendering="crispEdges" x="33.4" y="720" width="9.3" height="8.5" fill="#fff" stroke="#111" stroke-width="0.9"/><path d="M38.5 728.5 V738" stroke="#111" stroke-width="0.9"/><rect shape-rendering="crispEdges" x="37.3" y="758.9" width="9.3" height="9.8" fill="#9a9a9a" stroke="#111" stroke-width="1.1"/><rect shape-rendering="crispEdges" x="36.3" y="769.7" width="12.7" height="14.7" fill="none" stroke="#111" stroke-width="1.2"/><path d="M37.5 771 L48 783 M48 771 L37.5 783" stroke="#111" stroke-width="0.8"/><rect shape-rendering="crispEdges" x="-1" y="725.5" width="3.5" height="27.5" fill="none" stroke="#111" stroke-width="1"/><rect shape-rendering="crispEdges" x="9.8" y="755" width="7.9" height="24.5" fill="none" stroke="#111" stroke-width="1"/><path d="M12 769 H15 V773 H12 Z" fill="none" stroke="#111" stroke-width="0.9"/><path d="M2 755 V773" stroke="#111" stroke-width="0.9" stroke-dasharray="3 2"/><path d="M0 750 Q8 738 15 750 Z M2 794 Q12 782 22 794 Z" fill="#f0f0f0" stroke="#111" stroke-width="0.9"/><path d="M0 797.2 H53" stroke="#111" stroke-width="1.1"/><rect shape-rendering="crispEdges" x="0" y="799" width="17" height="7" fill="#222"/><circle cx="9.2" cy="802" r="8.5" fill="none" stroke="#1f3fc8" stroke-width="1.1"/><path d="M0 802 H18" stroke="#1f3fc8" stroke-width="0.9"/><rect shape-rendering="crispEdges" x="18.2" y="800.6" width="9.3" height="7.8" fill="#333" stroke="#111" stroke-width="1"/><rect shape-rendering="crispEdges" x="28" y="800.6" width="7.3" height="6.4" fill="none" stroke="#111" stroke-width="0.9"/><rect shape-rendering="crispEdges" x="38.3" y="799.5" width="10.3" height="7" fill="none" stroke="#111" stroke-width="1"/><path d="M39 787 Q42 783 46 787 M44 785 H52 V793 H44" stroke="#111" stroke-width="0.9" fill="none"/><rect shape-rendering="crispEdges" x="50" y="815" width="5" height="11" fill="none" stroke="#111" stroke-width="0.9"/><text x="1" y="845" font-family="Liberation Sans" font-size="4.5" fill="#222">Live/Work Unit</text><rect shape-rendering="crispEdges" x="6.5" y="848" width="22" height="5.5" fill="#fff" stroke="#111" stroke-width="0.9"/><rect shape-rendering="crispEdges" x="40.5" y="846.5" width="9" height="7.5" fill="#fff" stroke="#111" stroke-width="0.9"/><path d="M49.5 850 L60 848" stroke="#111" stroke-width="0.8"/><path d="M5.5 857 V925 M25 859 L33 893" stroke="#111" stroke-width="1" fill="none"/><rect shape-rendering="crispEdges" x="24" y="857" width="4" height="3" fill="#111"/><rect shape-rendering="crispEdges" x="58" y="870" width="5" height="5" fill="none" stroke="#111" stroke-width="1.2"/><path d="M2 888 L5 892 L2 896 L-1 892 Z M24 887 L28 891 L24 895 L20 891 Z M46 885 L50 889 L46 893 L42 889 Z" fill="#fff" stroke="#111" stroke-width="0.8"/><circle cx="69" cy="720.6" r="9.5" fill="#fff" stroke="#111" stroke-width="0.9"/><path d="M59.5 720.6 H78.5" stroke="#111" stroke-width="0.6"/><path d="M57 724 L66 711 L60 720 Z M64 731 L72 733 L66 727 Z" fill="#111"/><circle cx="100" cy="741" r="8" fill="#fff" stroke="#111" stroke-width="0.9"/><path d="M88 740 L100 729 L112 740 Z" fill="#111"/><path d="M92 741 H108" stroke="#111" stroke-width="0.6"/><circle cx="95.6" cy="821.5" r="8.3" fill="none" stroke="#2b52c8" stroke-width="1.1"/><path d="M87.3 821.5 H104" stroke="#2b52c8" stroke-width="0.7"/><circle cx="35" cy="907.7" r="9" fill="none" stroke="#2b52c8" stroke-width="1.1"/><path d="M26 907 H44" stroke="#2b52c8" stroke-width="0.7"/><path d="M24 910 L28 902 L26 912 Z M33 916 L38 920 L35 914 Z" fill="#2b52c8"/><circle cx="6.8" cy="933.7" r="9" fill="none" stroke="#2b52c8" stroke-width="1.1"/><path d="M-2 934 H16" stroke="#2b52c8" stroke-width="0.7"/><path d="M4 922 L7 925 L1 926 Z M0 942 L5 946 L3 940 Z" fill="#2b52c8"/><path d="M170.5 1056 H213 M170.5 1058 H213" stroke="#111" stroke-width="1.1"/><path d="M171 1051 V1061 M180 1053 V1057 M188 1051 V1057 M205 1051 V1057" stroke="#111" stroke-width="0.8"/><text x="170" y="1068" font-family="Liberation Sans" font-size="4" fill="#555">1/8" = 1'-0"</text></svg>
<div style="position:absolute;left:248.5px;top:253px;width:367.5px;height:1043px;overflow:hidden"><div style="position:absolute;left:0.00px;top:334.50px;width:367.5px;height:29px;background:#f0f0f0;border-top:1px solid #dddddd;border-bottom:1px solid #dddddd;box-sizing:border-box;"></div><svg style="position:absolute;left:11.50px;top:96.00px" width="3" height="947" viewBox="0 0 3 947"><path d="M1.5 0 V947" stroke="#b9b9b9" stroke-width="1" stroke-dasharray="3 2"/></svg><svg style="position:absolute;left:35.50px;top:156.00px" width="3" height="494" viewBox="0 0 3 494"><path d="M1.5 0 V493" stroke="#b9b9b9" stroke-width="1" stroke-dasharray="3 2"/></svg><svg style="position:absolute;left:6.50px;top:72.00px" width="15" height="14" viewBox="0 0 15 14"><path d="M1.5 7 H13.5" stroke="#6a6a6a" stroke-width="2.6"/></svg><svg style="position:absolute;left:31.50px;top:66.00px" width="26" height="25" viewBox="0 0 26 25"><path d="M1 6 V1 H6 M19 1 H24 V6 M24 18 V23 H19 M6 23 H1 V18" stroke="#6a6a6a" stroke-width="1.8" fill="none"/><path d="M7 9 L10 5.5 H18 V14 L15 18 H7 Z" fill="#d6d6d6" stroke="#6a6a6a" stroke-width="1.4"/><path d="M7 9 H15 V18 M15 9 L18 5.5" stroke="#6a6a6a" stroke-width="1.2" fill="none"/></svg><div style="position:absolute;left:62.70px;top:70.91px;font-size:17px;line-height:17px;color:#4d4d4d;font-weight:normal;white-space:nowrap;">Views (Fe)</div><svg style="position:absolute;left:12.50px;top:108.00px" width="14" height="3" viewBox="0 0 14 3"><path d="M0 1.5 H13" stroke="#b9b9b9" stroke-width="1" stroke-dasharray="3 2"/></svg><svg style="position:absolute;left:30.50px;top:102.00px" width="14" height="14" viewBox="0 0 14 14"><path d="M1 7 H13 M7 1 V13" stroke="#6a6a6a" stroke-width="2.6"/></svg><div style="position:absolute;left:57.30px;top:100.91px;font-size:17px;line-height:17px;color:#4d4d4d;font-weight:normal;white-space:nowrap;transform:scaleX(1.012);transform-origin:0 0;">Floor Plans (Enlarged Plan)</div><svg style="position:absolute;left:12.50px;top:138.00px" width="14" height="3" viewBox="0 0 14 3"><path d="M0 1.5 H13" stroke="#b9b9b9" stroke-width="1" stroke-dasharray="3 2"/></svg><svg style="position:absolute;left:30.50px;top:132.00px" width="14" height="14" viewBox="0 0 14 14"><path d="M1 7 H13" stroke="#6a6a6a" stroke-width="2.6"/></svg><div style="position:absolute;left:57.30px;top:130.91px;font-size:17px;line-height:17px;color:#4d4d4d;font-weight:normal;white-space:nowrap;transform:scaleX(1.012);transform-origin:0 0;">Floor Plans</div><svg style="position:absolute;left:36.50px;top:168.00px" width="38" height="3" viewBox="0 0 38 3"><path d="M0.5 1.5 H37" stroke="#b9b9b9" stroke-width="1" stroke-dasharray="3 2"/></svg><svg style="position:absolute;left:79.50px;top:157.00px" width="26" height="25" viewBox="0 0 26 25"><rect x="1.5" y="1.5" width="23" height="22" fill="#fff" stroke="#5c5c5c" stroke-width="1.6" stroke-dasharray="3.2 1.6"/><rect x="4.5" y="4.5" width="17" height="16" fill="#5eace4" stroke="#5a5a5a" stroke-width="1.2"/></svg><div style="position:absolute;left:111.80px;top:160.91px;font-size:17px;line-height:17px;color:#4d4d4d;font-weight:normal;white-space:nowrap;transform:scaleX(1.025);transform-origin:0 0;">Parking</div><svg style="position:absolute;left:36.50px;top:198.00px" width="38" height="3" viewBox="0 0 38 3"><path d="M0.5 1.5 H37" stroke="#b9b9b9" stroke-width="1" stroke-dasharray="3 2"/></svg><svg style="position:absolute;left:79.50px;top:187.00px" width="26" height="25" viewBox="0 0 26 25"><rect x="1.5" y="1.5" width="23" height="22" fill="#fff" stroke="#5c5c5c" stroke-width="1.6" stroke-dasharray="3.2 1.6"/><rect x="4.5" y="4.5" width="17" height="16" fill="#5eace4" stroke="#5a5a5a" stroke-width="1.2"/></svg><div style="position:absolute;left:111.80px;top:190.91px;font-size:17px;line-height:17px;color:#4d4d4d;font-weight:normal;white-space:nowrap;transform:scaleX(1.025);transform-origin:0 0;">L1</div><svg style="position:absolute;left:36.50px;top:228.00px" width="38" height="3" viewBox="0 0 38 3"><path d="M0.5 1.5 H37" stroke="#b9b9b9" stroke-width="1" stroke-dasharray="3 2"/></svg><svg style="position:absolute;left:79.50px;top:217.00px" width="26" height="25" viewBox="0 0 26 25"><rect x="1.5" y="1.5" width="23" height="22" fill="#fff" stroke="#5c5c5c" stroke-width="1.6" stroke-dasharray="3.2 1.6"/><rect x="4.5" y="4.5" width="17" height="16" fill="#5eace4" stroke="#5a5a5a" stroke-width="1.2"/></svg><div style="position:absolute;left:111.80px;top:220.91px;font-size:17px;line-height:17px;color:#4d4d4d;font-weight:normal;white-space:nowrap;transform:scaleX(1.025);transform-origin:0 0;">L2</div><svg style="position:absolute;left:36.50px;top:258.00px" width="38" height="3" viewBox="0 0 38 3"><path d="M0.5 1.5 H37" stroke="#b9b9b9" stroke-width="1" stroke-dasharray="3 2"/></svg><svg style="position:absolute;left:79.50px;top:247.00px" width="26" height="25" viewBox="0 0 26 25"><rect x="1.5" y="1.5" width="23" height="22" fill="#fff" stroke="#5c5c5c" stroke-width="1.6" stroke-dasharray="3.2 1.6"/><rect x="4.5" y="4.5" width="17" height="16" fill="#5eace4" stroke="#5a5a5a" stroke-width="1.2"/></svg><div style="position:absolute;left:111.80px;top:250.91px;font-size:17px;line-height:17px;color:#4d4d4d;font-weight:normal;white-space:nowrap;transform:scaleX(1.025);transform-origin:0 0;">L3</div><svg style="position:absolute;left:36.50px;top:288.00px" width="38" height="3" viewBox="0 0 38 3"><path d="M0.5 1.5 H37" stroke="#b9b9b9" stroke-width="1" stroke-dasharray="3 2"/></svg><svg style="position:absolute;left:79.50px;top:277.00px" width="26" height="25" viewBox="0 0 26 25"><rect x="1.5" y="1.5" width="23" height="22" fill="#fff" stroke="#5c5c5c" stroke-width="1.6" stroke-dasharray="3.2 1.6"/><rect x="4.5" y="4.5" width="17" height="16" fill="#efefef" stroke="#5a5a5a" stroke-width="1.2"/></svg><div style="position:absolute;left:111.80px;top:280.91px;font-size:17px;line-height:17px;color:#4d4d4d;font-weight:normal;white-space:nowrap;transform:scaleX(1.025);transform-origin:0 0;">Elevator E1 - Small Room Callout</div><svg style="position:absolute;left:36.50px;top:318.00px" width="38" height="3" viewBox="0 0 38 3"><path d="M0.5 1.5 H37" stroke="#b9b9b9" stroke-width="1" stroke-dasharray="3 2"/></svg><svg style="position:absolute;left:79.50px;top:307.00px" width="26" height="25" viewBox="0 0 26 25"><rect x="1.5" y="1.5" width="23" height="22" fill="#fff" stroke="#5c5c5c" stroke-width="1.6" stroke-dasharray="3.2 1.6"/><rect x="4.5" y="4.5" width="17" height="16" fill="#efefef" stroke="#5a5a5a" stroke-width="1.2"/></svg><div style="position:absolute;left:111.80px;top:310.91px;font-size:17px;line-height:17px;color:#4d4d4d;font-weight:normal;white-space:nowrap;transform:scaleX(1.025);transform-origin:0 0;">Elevator E2 - Small Room Callout</div><svg style="position:absolute;left:36.50px;top:348.00px" width="38" height="3" viewBox="0 0 38 3"><path d="M0.5 1.5 H37" stroke="#b9b9b9" stroke-width="1" stroke-dasharray="3 2"/></svg><svg style="position:absolute;left:79.50px;top:337.00px" width="26" height="25" viewBox="0 0 26 25"><rect x="1.5" y="1.5" width="23" height="22" fill="#fff" stroke="#5c5c5c" stroke-width="1.6" stroke-dasharray="3.2 1.6"/><rect x="4.5" y="4.5" width="17" height="16" fill="#5eace4" stroke="#5a5a5a" stroke-width="1.2"/></svg><div style="position:absolute;left:111.80px;top:340.91px;font-size:17px;line-height:17px;color:#333;font-weight:bold;white-space:nowrap;transform:scaleX(1.025);transform-origin:0 0;">L4</div><svg style="position:absolute;left:36.50px;top:378.00px" width="38" height="3" viewBox="0 0 38 3"><path d="M0.5 1.5 H37" stroke="#b9b9b9" stroke-width="1" stroke-dasharray="3 2"/></svg><svg style="position:absolute;left:79.50px;top:367.00px" width="26" height="25" viewBox="0 0 26 25"><rect x="1.5" y="1.5" width="23" height="22" fill="#fff" stroke="#5c5c5c" stroke-width="1.6" stroke-dasharray="3.2 1.6"/><rect x="4.5" y="4.5" width="17" height="16" fill="#efefef" stroke="#5a5a5a" stroke-width="1.2"/></svg><div style="position:absolute;left:111.80px;top:370.91px;font-size:17px;line-height:17px;color:#4d4d4d;font-weight:normal;white-space:nowrap;transform:scaleX(1.025);transform-origin:0 0;">L4 Copy 1</div><svg style="position:absolute;left:36.50px;top:408.00px" width="38" height="3" viewBox="0 0 38 3"><path d="M0.5 1.5 H37" stroke="#b9b9b9" stroke-width="1" stroke-dasharray="3 2"/></svg><svg style="position:absolute;left:79.50px;top:397.00px" width="26" height="25" viewBox="0 0 26 25"><rect x="1.5" y="1.5" width="23" height="22" fill="#fff" stroke="#5c5c5c" stroke-width="1.6" stroke-dasharray="3.2 1.6"/><rect x="4.5" y="4.5" width="17" height="16" fill="#efefef" stroke="#5a5a5a" stroke-width="1.2"/></svg><div style="position:absolute;left:111.80px;top:400.91px;font-size:17px;line-height:17px;color:#4d4d4d;font-weight:normal;white-space:nowrap;transform:scaleX(1.025);transform-origin:0 0;">Live/Work Unit 409 - Small Room Callout</div><svg style="position:absolute;left:36.50px;top:438.00px" width="38" height="3" viewBox="0 0 38 3"><path d="M0.5 1.5 H37" stroke="#b9b9b9" stroke-width="1" stroke-dasharray="3 2"/></svg><svg style="position:absolute;left:79.50px;top:427.00px" width="26" height="25" viewBox="0 0 26 25"><rect x="1.5" y="1.5" width="23" height="22" fill="#fff" stroke="#5c5c5c" stroke-width="1.6" stroke-dasharray="3.2 1.6"/><rect x="4.5" y="4.5" width="17" height="16" fill="#efefef" stroke="#5a5a5a" stroke-width="1.2"/></svg><div style="position:absolute;left:111.80px;top:430.91px;font-size:17px;line-height:17px;color:#4d4d4d;font-weight:normal;white-space:nowrap;transform:scaleX(1.025);transform-origin:0 0;">Stair S1 - Small Room Callout</div><svg style="position:absolute;left:36.50px;top:468.00px" width="38" height="3" viewBox="0 0 38 3"><path d="M0.5 1.5 H37" stroke="#b9b9b9" stroke-width="1" stroke-dasharray="3 2"/></svg><svg style="position:absolute;left:79.50px;top:457.00px" width="26" height="25" viewBox="0 0 26 25"><rect x="1.5" y="1.5" width="23" height="22" fill="#fff" stroke="#5c5c5c" stroke-width="1.6" stroke-dasharray="3.2 1.6"/><rect x="4.5" y="4.5" width="17" height="16" fill="#efefef" stroke="#5a5a5a" stroke-width="1.2"/></svg><div style="position:absolute;left:111.80px;top:460.91px;font-size:17px;line-height:17px;color:#4d4d4d;font-weight:normal;white-space:nowrap;transform:scaleX(1.025);transform-origin:0 0;">Stair S2 - Small Room Callout</div><svg style="position:absolute;left:36.50px;top:498.00px" width="38" height="3" viewBox="0 0 38 3"><path d="M0.5 1.5 H37" stroke="#b9b9b9" stroke-width="1" stroke-dasharray="3 2"/></svg><svg style="position:absolute;left:79.50px;top:487.00px" width="26" height="25" viewBox="0 0 26 25"><rect x="1.5" y="1.5" width="23" height="22" fill="#fff" stroke="#5c5c5c" stroke-width="1.6" stroke-dasharray="3.2 1.6"/><rect x="4.5" y="4.5" width="17" height="16" fill="#efefef" stroke="#5a5a5a" stroke-width="1.2"/></svg><div style="position:absolute;left:111.80px;top:490.91px;font-size:17px;line-height:17px;color:#4d4d4d;font-weight:normal;white-space:nowrap;transform:scaleX(1.025);transform-origin:0 0;">Stair S3 - Small Room Callout</div><svg style="position:absolute;left:36.50px;top:528.00px" width="38" height="3" viewBox="0 0 38 3"><path d="M0.5 1.5 H37" stroke="#b9b9b9" stroke-width="1" stroke-dasharray="3 2"/></svg><svg style="position:absolute;left:79.50px;top:517.00px" width="26" height="25" viewBox="0 0 26 25"><rect x="1.5" y="1.5" width="23" height="22" fill="#fff" stroke="#5c5c5c" stroke-width="1.6" stroke-dasharray="3.2 1.6"/><rect x="4.5" y="4.5" width="17" height="16" fill="#efefef" stroke="#5a5a5a" stroke-width="1.2"/></svg><div style="position:absolute;left:111.80px;top:520.91px;font-size:17px;line-height:17px;color:#4d4d4d;font-weight:normal;white-space:nowrap;transform:scaleX(1.025);transform-origin:0 0;">Studio Unit 404 - Small Room Callout</div><svg style="position:absolute;left:36.50px;top:558.00px" width="38" height="3" viewBox="0 0 38 3"><path d="M0.5 1.5 H37" stroke="#b9b9b9" stroke-width="1" stroke-dasharray="3 2"/></svg><svg style="position:absolute;left:79.50px;top:547.00px" width="26" height="25" viewBox="0 0 26 25"><rect x="1.5" y="1.5" width="23" height="22" fill="#fff" stroke="#5c5c5c" stroke-width="1.6" stroke-dasharray="3.2 1.6"/><rect x="4.5" y="4.5" width="17" height="16" fill="#efefef" stroke="#5a5a5a" stroke-width="1.2"/></svg><div style="position:absolute;left:111.80px;top:550.91px;font-size:17px;line-height:17px;color:#4d4d4d;font-weight:normal;white-space:nowrap;transform:scaleX(1.025);transform-origin:0 0;">Two Story Studio Unit 406 - Small Room Callout</div><svg style="position:absolute;left:36.50px;top:588.00px" width="38" height="3" viewBox="0 0 38 3"><path d="M0.5 1.5 H37" stroke="#b9b9b9" stroke-width="1" stroke-dasharray="3 2"/></svg><svg style="position:absolute;left:79.50px;top:577.00px" width="26" height="25" viewBox="0 0 26 25"><rect x="1.5" y="1.5" width="23" height="22" fill="#fff" stroke="#5c5c5c" stroke-width="1.6" stroke-dasharray="3.2 1.6"/><rect x="4.5" y="4.5" width="17" height="16" fill="#5eace4" stroke="#5a5a5a" stroke-width="1.2"/></svg><div style="position:absolute;left:111.80px;top:580.91px;font-size:17px;line-height:17px;color:#4d4d4d;font-weight:normal;white-space:nowrap;transform:scaleX(1.025);transform-origin:0 0;">L5</div><svg style="position:absolute;left:36.50px;top:618.00px" width="38" height="3" viewBox="0 0 38 3"><path d="M0.5 1.5 H37" stroke="#b9b9b9" stroke-width="1" stroke-dasharray="3 2"/></svg><svg style="position:absolute;left:79.50px;top:607.00px" width="26" height="25" viewBox="0 0 26 25"><rect x="1.5" y="1.5" width="23" height="22" fill="#fff" stroke="#5c5c5c" stroke-width="1.6" stroke-dasharray="3.2 1.6"/><rect x="4.5" y="4.5" width="17" height="16" fill="#5eace4" stroke="#5a5a5a" stroke-width="1.2"/></svg><div style="position:absolute;left:111.80px;top:610.91px;font-size:17px;line-height:17px;color:#4d4d4d;font-weight:normal;white-space:nowrap;transform:scaleX(1.025);transform-origin:0 0;">R2</div><svg style="position:absolute;left:36.50px;top:648.00px" width="38" height="3" viewBox="0 0 38 3"><path d="M0.5 1.5 H37" stroke="#b9b9b9" stroke-width="1" stroke-dasharray="3 2"/></svg><svg style="position:absolute;left:79.50px;top:637.00px" width="26" height="25" viewBox="0 0 26 25"><rect x="1.5" y="1.5" width="23" height="22" fill="#fff" stroke="#5c5c5c" stroke-width="1.6" stroke-dasharray="3.2 1.6"/><rect x="4.5" y="4.5" width="17" height="16" fill="#5eace4" stroke="#5a5a5a" stroke-width="1.2"/></svg><div style="position:absolute;left:111.80px;top:640.91px;font-size:17px;line-height:17px;color:#4d4d4d;font-weight:normal;white-space:nowrap;transform:scaleX(1.025);transform-origin:0 0;">R3</div><svg style="position:absolute;left:12.50px;top:678.00px" width="14" height="3" viewBox="0 0 14 3"><path d="M0 1.5 H13" stroke="#b9b9b9" stroke-width="1" stroke-dasharray="3 2"/></svg><svg style="position:absolute;left:30.50px;top:672.00px" width="14" height="14" viewBox="0 0 14 14"><path d="M1 7 H13 M7 1 V13" stroke="#6a6a6a" stroke-width="2.6"/></svg><div style="position:absolute;left:57.30px;top:670.91px;font-size:17px;line-height:17px;color:#4d4d4d;font-weight:normal;white-space:nowrap;transform:scaleX(1.012);transform-origin:0 0;">Floor Plans (Life Safety Plan)</div><svg style="position:absolute;left:12.50px;top:708.00px" width="14" height="3" viewBox="0 0 14 3"><path d="M0 1.5 H13" stroke="#b9b9b9" stroke-width="1" stroke-dasharray="3 2"/></svg><svg style="position:absolute;left:30.50px;top:702.00px" width="14" height="14" viewBox="0 0 14 14"><path d="M1 7 H13 M7 1 V13" stroke="#6a6a6a" stroke-width="2.6"/></svg><div style="position:absolute;left:57.30px;top:700.91px;font-size:17px;line-height:17px;color:#4d4d4d;font-weight:normal;white-space:nowrap;transform:scaleX(1.012);transform-origin:0 0;">Floor Plans (Schematic Plan)</div><svg style="position:absolute;left:12.50px;top:738.00px" width="14" height="3" viewBox="0 0 14 3"><path d="M0 1.5 H13" stroke="#b9b9b9" stroke-width="1" stroke-dasharray="3 2"/></svg><svg style="position:absolute;left:30.50px;top:732.00px" width="14" height="14" viewBox="0 0 14 14"><path d="M1 7 H13 M7 1 V13" stroke="#6a6a6a" stroke-width="2.6"/></svg><div style="position:absolute;left:57.30px;top:730.91px;font-size:17px;line-height:17px;color:#4d4d4d;font-weight:normal;white-space:nowrap;transform:scaleX(1.012);transform-origin:0 0;">Floor Plans (Site Plan)</div><svg style="position:absolute;left:12.50px;top:768.00px" width="14" height="3" viewBox="0 0 14 3"><path d="M0 1.5 H13" stroke="#b9b9b9" stroke-width="1" stroke-dasharray="3 2"/></svg><svg style="position:absolute;left:30.50px;top:762.00px" width="14" height="14" viewBox="0 0 14 14"><path d="M1 7 H13 M7 1 V13" stroke="#6a6a6a" stroke-width="2.6"/></svg><div style="position:absolute;left:57.30px;top:760.91px;font-size:17px;line-height:17px;color:#4d4d4d;font-weight:normal;white-space:nowrap;transform:scaleX(1.012);transform-origin:0 0;">Floor Plans (Working)</div><svg style="position:absolute;left:12.50px;top:798.00px" width="14" height="3" viewBox="0 0 14 3"><path d="M0 1.5 H13" stroke="#b9b9b9" stroke-width="1" stroke-dasharray="3 2"/></svg><svg style="position:absolute;left:30.50px;top:792.00px" width="14" height="14" viewBox="0 0 14 14"><path d="M1 7 H13 M7 1 V13" stroke="#6a6a6a" stroke-width="2.6"/></svg><div style="position:absolute;left:57.30px;top:790.91px;font-size:17px;line-height:17px;color:#4d4d4d;font-weight:normal;white-space:nowrap;transform:scaleX(1.012);transform-origin:0 0;">Floor Plans (Working Dimensions)</div><svg style="position:absolute;left:12.50px;top:828.00px" width="14" height="3" viewBox="0 0 14 3"><path d="M0 1.5 H13" stroke="#b9b9b9" stroke-width="1" stroke-dasharray="3 2"/></svg><svg style="position:absolute;left:30.50px;top:822.00px" width="14" height="14" viewBox="0 0 14 14"><path d="M1 7 H13 M7 1 V13" stroke="#6a6a6a" stroke-width="2.6"/></svg><div style="position:absolute;left:57.30px;top:820.91px;font-size:17px;line-height:17px;color:#4d4d4d;font-weight:normal;white-space:nowrap;transform:scaleX(1.012);transform-origin:0 0;">Ceiling Plans</div><svg style="position:absolute;left:12.50px;top:858.00px" width="14" height="3" viewBox="0 0 14 3"><path d="M0 1.5 H13" stroke="#b9b9b9" stroke-width="1" stroke-dasharray="3 2"/></svg><svg style="position:absolute;left:30.50px;top:852.00px" width="14" height="14" viewBox="0 0 14 14"><path d="M1 7 H13 M7 1 V13" stroke="#6a6a6a" stroke-width="2.6"/></svg><div style="position:absolute;left:57.30px;top:850.91px;font-size:17px;line-height:17px;color:#4d4d4d;font-weight:normal;white-space:nowrap;transform:scaleX(1.012);transform-origin:0 0;">Ceiling Plans (Working)</div><svg style="position:absolute;left:12.50px;top:888.00px" width="14" height="3" viewBox="0 0 14 3"><path d="M0 1.5 H13" stroke="#b9b9b9" stroke-width="1" stroke-dasharray="3 2"/></svg><svg style="position:absolute;left:30.50px;top:882.00px" width="14" height="14" viewBox="0 0 14 14"><path d="M1 7 H13 M7 1 V13" stroke="#6a6a6a" stroke-width="2.6"/></svg><div style="position:absolute;left:57.30px;top:880.91px;font-size:17px;line-height:17px;color:#4d4d4d;font-weight:normal;white-space:nowrap;transform:scaleX(1.012);transform-origin:0 0;">3D Views (3D Coordination)</div><svg style="position:absolute;left:12.50px;top:918.00px" width="14" height="3" viewBox="0 0 14 3"><path d="M0 1.5 H13" stroke="#b9b9b9" stroke-width="1" stroke-dasharray="3 2"/></svg><svg style="position:absolute;left:30.50px;top:912.00px" width="14" height="14" viewBox="0 0 14 14"><path d="M1 7 H13 M7 1 V13" stroke="#6a6a6a" stroke-width="2.6"/></svg><div style="position:absolute;left:57.30px;top:910.91px;font-size:17px;line-height:17px;color:#4d4d4d;font-weight:normal;white-space:nowrap;transform:scaleX(1.012);transform-origin:0 0;">3D Views</div><svg style="position:absolute;left:12.50px;top:948.00px" width="14" height="3" viewBox="0 0 14 3"><path d="M0 1.5 H13" stroke="#b9b9b9" stroke-width="1" stroke-dasharray="3 2"/></svg><svg style="position:absolute;left:30.50px;top:942.00px" width="14" height="14" viewBox="0 0 14 14"><path d="M1 7 H13 M7 1 V13" stroke="#6a6a6a" stroke-width="2.6"/></svg><div style="position:absolute;left:57.30px;top:940.91px;font-size:17px;line-height:17px;color:#4d4d4d;font-weight:normal;white-space:nowrap;transform:scaleX(1.012);transform-origin:0 0;">Elevations (Building Elevation)</div><svg style="position:absolute;left:12.50px;top:978.00px" width="14" height="3" viewBox="0 0 14 3"><path d="M0 1.5 H13" stroke="#b9b9b9" stroke-width="1" stroke-dasharray="3 2"/></svg><svg style="position:absolute;left:30.50px;top:972.00px" width="14" height="14" viewBox="0 0 14 14"><path d="M1 7 H13 M7 1 V13" stroke="#6a6a6a" stroke-width="2.6"/></svg><div style="position:absolute;left:57.30px;top:970.91px;font-size:17px;line-height:17px;color:#4d4d4d;font-weight:normal;white-space:nowrap;transform:scaleX(1.012);transform-origin:0 0;">Elevations (Interior Elevation)</div><svg style="position:absolute;left:12.50px;top:1008.00px" width="14" height="3" viewBox="0 0 14 3"><path d="M0 1.5 H13" stroke="#b9b9b9" stroke-width="1" stroke-dasharray="3 2"/></svg><svg style="position:absolute;left:30.50px;top:1002.00px" width="14" height="14" viewBox="0 0 14 14"><path d="M1 7 H13 M7 1 V13" stroke="#6a6a6a" stroke-width="2.6"/></svg><div style="position:absolute;left:57.30px;top:1000.91px;font-size:17px;line-height:17px;color:#4d4d4d;font-weight:normal;white-space:nowrap;transform:scaleX(1.012);transform-origin:0 0;">Sections (Building Section)</div><svg style="position:absolute;left:12.50px;top:1038.00px" width="14" height="3" viewBox="0 0 14 3"><path d="M0 1.5 H13" stroke="#b9b9b9" stroke-width="1" stroke-dasharray="3 2"/></svg><svg style="position:absolute;left:30.50px;top:1032.00px" width="14" height="14" viewBox="0 0 14 14"><path d="M1 7 H13 M7 1 V13" stroke="#6a6a6a" stroke-width="2.6"/></svg><div style="position:absolute;left:57.30px;top:1030.91px;font-size:17px;line-height:17px;color:#4d4d4d;font-weight:normal;white-space:nowrap;transform:scaleX(1.012);transform-origin:0 0;">Sections (Wall Section)</div></div>
<div style="position:absolute;left:0px;top:1295px;width:1223px;height:2.5px;background:#ebebeb;"></div>
<div style="position:absolute;left:0px;top:1297.5px;width:1223px;height:26.5px;background:#f4f4f4;"></div>
<div style="position:absolute;left:242px;top:1295px;width:3.5px;height:2.5px;background:#bdbdbd;"></div>
<div style="position:absolute;left:646px;top:1295px;width:3.5px;height:2.5px;background:#bdbdbd;"></div>
<svg style="position:absolute;left:104px;top:1310px;" width="15" height="10" viewBox="0 0 15 10"><path d="M1.5 2 L7.5 8 L13.5 2" stroke="#9a9a9a" stroke-width="1.5" fill="none"/></svg>
<svg style="position:absolute;left:131px;top:1301px;" width="24" height="23" viewBox="0 0 24 23"><path d="M10 1 H22 V10 H16 L13 13 V10 H10 Z" fill="#f5f5f5" stroke="#9c9c9c" stroke-width="1.4"/><circle cx="8" cy="15" r="3.6" fill="none" stroke="#9c9c9c" stroke-width="1.4"/><path d="M1 24 Q1 19 8 19 Q15 19 15 24" fill="none" stroke="#9c9c9c" stroke-width="1.4"/></svg>
<div style="position:absolute;left:153.00px;top:1310.61px;font-size:17px;line-height:17px;color:#9aa4b8;font-weight:normal;white-space:nowrap;">:0</div>
<svg style="position:absolute;left:196px;top:1303px;" width="26" height="21" viewBox="0 0 26 21"><rect x="1" y="1" width="24" height="22" fill="#f5f5f5" stroke="#5f5f5f" stroke-width="1.6"/><rect x="1" y="1" width="24" height="3" fill="#5f5f5f"/><path d="M4 9 H7 M10 9 H22 M4 14 H7 M10 14 H22 M4 19 H7 M10 19 H22" stroke="#5f5f5f" stroke-width="2"/></svg>
<svg style="position:absolute;left:232px;top:1303px;" width="26" height="21" viewBox="0 0 26 21"><rect x="1" y="1" width="24" height="22" fill="#f5f5f5" stroke="#9a9a9a" stroke-width="1.6"/><rect x="1" y="1" width="24" height="3" fill="#9a9a9a"/><path d="M4 9 H7 M10 9 H22 M4 14 H7 M10 14 H22" stroke="#9a9a9a" stroke-width="2"/><path d="M3 20 H14 L18 17 V23" fill="#9a9a9a" stroke="#9a9a9a" stroke-width="1.5"/></svg>
<div style="position:absolute;left:271.00px;top:1309.76px;font-size:18px;line-height:18px;color:#3a3a3a;font-weight:normal;white-space:nowrap;">Main Model</div>
<svg style="position:absolute;left:555px;top:1311px;" width="15" height="10" viewBox="0 0 15 10"><path d="M1.5 2 L7.5 8 L13.5 2" stroke="#7a7a7a" stroke-width="1.5" fill="none"/></svg>
<svg style="position:absolute;left:580px;top:1310px;" width="14" height="14" viewBox="0 0 14 14"><rect x="1" y="1" width="12" height="12" fill="#6f6f6f"/><path d="M3.5 7 L6 9.5 L10.5 4" stroke="#fff" stroke-width="1.8" fill="none"/></svg>
<div style="position:absolute;left:597.20px;top:1309.76px;font-size:18px;line-height:18px;color:#3a3a3a;font-weight:normal;white-space:nowrap;transform:scaleX(0.9635);transform-origin:left 0;">Exclude Options</div>
<svg style="position:absolute;left:900px;top:1302px;" width="28" height="22" viewBox="0 0 28 22"><path d="M6 2 H12 Q16 2 16 5 Q16 8 12 8 H7 Q3 8 3 5 Q3 2 6 2 M13 8 H19 Q23 8 23 11 Q23 14 19 14 H13" fill="none" stroke="#e8894a" stroke-width="1.6"/><path d="M14 10 V22 L17 19 L20 23 L22 22 L19 18 L23 18 Z" fill="#fff" stroke="#333" stroke-width="1.1"/></svg>
<svg style="position:absolute;left:936px;top:1302px;" width="28" height="22" viewBox="0 0 28 22"><path d="M2 10 L10 3 H16 L10 10 Z M2 17 L7 13 H16 L11 17 Z" fill="#5aa4dc"/><path d="M16 2 L22 8 M22 2 L16 8" stroke="#e8312f" stroke-width="2.2"/><path d="M14 10 V22 L17 19 L20 23 L22 22 L19 18 L23 18 Z" fill="#fff" stroke="#333" stroke-width="1.1"/></svg>
<svg style="position:absolute;left:974px;top:1302px;" width="26" height="22" viewBox="0 0 26 22"><path d="M3 3 H15 M6 3 V11 M12 3 V11 M3 11 H15 M9 11 V20" stroke="#777" stroke-width="1.4" fill="none"/><path d="M12 10 V22 L15 19 L18 23 L20 22 L17 18 L21 18 Z" fill="#fff" stroke="#333" stroke-width="1.1"/></svg>
<svg style="position:absolute;left:1009px;top:1302px;" width="28" height="22" viewBox="0 0 28 22"><path d="M2 8 L8 3 H12 V22 H2 Z" fill="#5aa4dc"/><path d="M17 2 L23 8 M23 2 L17 8" stroke="#e8312f" stroke-width="2.2"/><path d="M12 10 V22 L15 19 L18 23 L20 22 L17 18 L21 18 Z" fill="#fff" stroke="#333" stroke-width="1.1"/></svg>
<svg style="position:absolute;left:1046px;top:1301px;" width="26" height="23" viewBox="0 0 26 23"><path d="M10 2 V20 M2 11 H18 M10 1 L7 5 H13 Z M10 21 L7 17 H13 Z M1 11 L5 8 V14 Z M19 11 L15 8 V14 Z" stroke="#333" stroke-width="1.3" fill="#333"/><path d="M13 11 V23 L16 20 L19 24 L21 23 L18 19 L22 19 Z" fill="#fff" stroke="#333" stroke-width="1.1"/></svg>
<svg style="position:absolute;left:1080px;top:1302px;" width="24" height="22" viewBox="0 0 24 22"><g fill="#c8c8c8"><circle cx="12" cy="3" r="2"/><circle cx="19" cy="6" r="2"/><circle cx="21" cy="13" r="2"/><circle cx="5" cy="6" r="2"/><circle cx="3" cy="13" r="2"/><circle cx="7" cy="19" r="2"/><circle cx="17" cy="19" r="2"/></g></svg>
<svg style="position:absolute;left:1113px;top:1304px;" width="26" height="20" viewBox="0 0 26 20"><path d="M1.5 1.5 H24.5 V3.5 L15 13 V20 H11 V13 L1.5 3.5 Z" fill="#c8c8c8" stroke="#777" stroke-width="1.4"/><path d="M11 13 H15 V20 H11 Z" fill="#fff"/></svg>
<div style="position:absolute;left:1139.00px;top:1309.76px;font-size:18px;line-height:18px;color:#3a3a3a;font-weight:normal;white-space:nowrap;">:0</div>
<svg style="position:absolute;left:666px;top:271px;" width="23" height="21" viewBox="0 0 23 21"><path d="M11.5 2.5 C17.5 2.5 21 5.8 21 9.5 C21 13.3 17.3 16.5 11.5 16.5 C10.3 16.5 9.2 16.3 8.2 16 L3 19 L4.8 14.6 C3 13.3 2 11.5 2 9.5 C2 5.8 5.5 2.5 11.5 2.5 Z" fill="none" stroke="#ececec" stroke-width="2.4"/><path d="M7.5 8 H15.5 M7.5 11 H15.5" stroke="#ececec" stroke-width="1.8"/></svg>
<div style="position:absolute;left:694.60px;top:270.22px;font-size:21px;line-height:21px;color:#f0f0f0;font-weight:normal;white-space:nowrap;transform:scaleX(0.9784);transform-origin:left 0;">Chat</div>
<svg style="position:absolute;left:767px;top:270px;" width="23" height="23" viewBox="0 0 23 23"><path d="M2.5 1.5 H17 L21.5 6 V19.5 Q21.5 21.5 19.5 21.5 H3.5 Q1.5 21.5 1.5 19.5 V3.5 Q1.5 1.5 3.5 1.5 Z" fill="#ececec"/><rect x="5" y="4.5" width="11" height="4.5" fill="#1f1f1f"/><circle cx="11.5" cy="15" r="3.3" fill="#1f1f1f"/></svg>
<div style="position:absolute;left:795.60px;top:270.22px;font-size:21px;line-height:21px;color:#f0f0f0;font-weight:normal;white-space:nowrap;transform:scaleX(0.9956);transform-origin:left 0;">Commands</div>
<div style="position:absolute;left:667px;top:316px;width:542px;height:67px;background:#d9d9d9;border-radius:8px;box-shadow:0 0 9px rgba(0,0,0,0.35)"></div>
<svg style="position:absolute;left:689px;top:339px;" width="22" height="20" viewBox="0 0 22 20"><path d="M10 3 L3 10 L10 17 M3.5 10 H20" stroke="#404a52" stroke-width="2.3" fill="none"/></svg>
<div style="position:absolute;left:715.70px;top:339.72px;font-size:19px;line-height:19px;color:#3e4c57;font-weight:normal;white-space:nowrap;transform:scaleX(0.9917);transform-origin:left 0;">Back</div>
<div style="position:absolute;left:879px;top:332px;width:96px;height:35px;background:#c6c6c6;border-radius:5px"></div>
<svg style="position:absolute;left:887px;top:338px;" width="18" height="22" viewBox="0 0 18 22"><rect x="5.5" y="1" width="7" height="3" fill="#a00d0d"/><rect x="1.5" y="3.5" width="15" height="3" fill="#a00d0d"/><rect x="3.2" y="7.5" width="11.6" height="12.5" fill="none" stroke="#a00d0d" stroke-width="1.9"/><path d="M7 10 V18 M11 10 V18" stroke="#a00d0d" stroke-width="1.5"/></svg>
<div style="position:absolute;left:912.60px;top:339.32px;font-size:19px;line-height:19px;color:#a40f0f;font-weight:normal;white-space:nowrap;transform:scaleX(1.0032);transform-origin:left 0;">Delete</div>
<div style="position:absolute;left:983px;top:332px;width:93px;height:35px;background:#c6c6c6;border-radius:5px"></div>
<svg style="position:absolute;left:990px;top:342px;" width="21" height="14" viewBox="0 0 21 14"><circle cx="6.5" cy="4" r="3" fill="#3b4b58"/><circle cx="14.5" cy="4" r="3" fill="#3b4b58"/><path d="M0.5 13 Q0.5 8 6.5 8 Q12.5 8 12.5 13 Z M9 13 Q9 8 14.5 8 Q20.5 8 20.5 13 Z" fill="#3b4b58"/></svg>
<div style="position:absolute;left:1016.60px;top:339.32px;font-size:19px;line-height:19px;color:#3b4b58;font-weight:normal;white-space:nowrap;transform:scaleX(1.0118);transform-origin:left 0;">Share</div>
<div style="position:absolute;left:1083px;top:332px;width:111px;height:35px;background:#c6c6c6;border-radius:5px"></div>
<svg style="position:absolute;left:1092px;top:339px;" width="17" height="20" viewBox="0 0 17 20"><path d="M1 1 L15 10 L1 19 Z" fill="#0d4d12"/></svg>
<div style="position:absolute;left:1116.90px;top:340.12px;font-size:19px;line-height:19px;color:#0d4d12;font-weight:normal;white-space:nowrap;transform:scaleX(1.0108);transform-origin:left 0;">Execute</div>
<div style="position:absolute;left:667px;top:392px;width:542px;height:857px;background:#d9d9d9;border-radius:8px;overflow:hidden;box-shadow:0 0 9px rgba(0,0,0,0.35)"><div style="position:absolute;left:0;top:0;width:7px;height:857px;background:#0b2748"></div></div>
<div style="position:absolute;left:674px;top:392px;width:535px;height:40.5px;background:#e68a00;border-top-right-radius:4px;"></div>
<div style="position:absolute;left:674px;top:432.5px;width:535px;height:1px;background:#f0cf90;"></div>
<div style="position:absolute;left:674px;top:433.5px;width:535px;height:114px;background:#e3b75b;"></div>
<div style="position:absolute;left:674px;top:547px;width:535px;height:1.8px;background:#e68a00;"></div>
<svg style="position:absolute;left:688px;top:401px;" width="26" height="23" viewBox="0 0 26 23"><path d="M13 1.5 L25 22 H1 Z" fill="#f6ecd9"/><path d="M13 9 V15.5" stroke="#e68a00" stroke-width="2.4"/><circle cx="13" cy="18.6" r="1.4" fill="#e68a00"/></svg>
<div style="position:absolute;left:720.60px;top:402.92px;font-size:21px;line-height:21px;color:#f6e9d0;font-weight:normal;white-space:nowrap;">WARNINGS</div>
<svg style="position:absolute;left:1178px;top:407px;" width="17" height="10" viewBox="0 0 17 10"><path d="M1.5 9 L8.5 1.5 L15.5 9 Z" fill="#f2f2f2"/></svg>
<div style="position:absolute;left:690.30px;top:450.08px;font-size:24px;line-height:24px;color:#262626;font-weight:normal;white-space:nowrap;transform:scaleX(0.9970);transform-origin:left 0;">The app may not work properly due to Revit&#x27;s</div>
<div style="position:absolute;left:690.30px;top:478.28px;font-size:24px;line-height:24px;color:#262626;font-weight:normal;white-space:nowrap;transform:scaleX(0.9954);transform-origin:left 0;">refresh limitations. Please perform a &#x27;Zoom to</div>
<div style="position:absolute;left:690.30px;top:506.68px;font-size:24px;line-height:24px;color:#262626;font-weight:normal;white-space:nowrap;transform:scaleX(0.9719);transform-origin:left 0;">Fit&#x27; to ensure accurate results.</div>
<div style="position:absolute;left:689.80px;top:565.51px;font-size:32px;line-height:32px;color:#1c1c1c;font-weight:bold;white-space:nowrap;transform:scaleX(1.0262);transform-origin:left 0;">Create Callouts for Rooms</div>
<div style="position:absolute;left:689.80px;top:603.61px;font-size:32px;line-height:32px;color:#1c1c1c;font-weight:bold;white-space:nowrap;transform:scaleX(1.0255);transform-origin:left 0;">with Area Less Than</div>
<div style="position:absolute;left:689.80px;top:640.41px;font-size:32px;line-height:32px;color:#1c1c1c;font-weight:bold;white-space:nowrap;">Value</div>
<svg style="position:absolute;left:1151px;top:605px;" width="32" height="30" viewBox="0 0 32 30"><path d="M16 3 L19.3 10.6 L27.6 11.4 L21.4 17 L23.1 25.5 L16 21.2 L8.9 25.5 L10.6 17 L4.4 11.4 L12.7 10.6 Z" fill="#e3ddd8" stroke="#e39a1e" stroke-width="2" stroke-linejoin="round"/></svg>
<div style="position:absolute;left:689.80px;top:687.11px;font-size:17px;line-height:17px;color:#8f8f8f;font-weight:normal;white-space:nowrap;">Modified: 2024</div>
<div style="position:absolute;left:674px;top:721px;width:535px;height:40.5px;background:#c8c8c8;border-top:1px solid #bdbdbd;border-bottom:1px solid #bdbdbd;box-sizing:border-box;"></div>
<div style="position:absolute;left:689.50px;top:731.22px;font-size:21px;line-height:21px;color:#222;font-weight:normal;white-space:nowrap;">Edit</div>
<div style="position:absolute;left:689.50px;top:787.38px;font-size:22px;line-height:22px;color:#1c1c1c;font-weight:bold;white-space:nowrap;">Area</div>
<div style="position:absolute;left:1080px;top:777px;width:113px;height:39px;border:1px solid #8b8b8b;border-radius:8px;background:#dcdcdc;box-sizing:border-box"></div>
<div style="position:absolute;left:690px;top:832px;width:504px;height:82px;background:#d1d1d1;border-radius:8px"></div>
<div style="position:absolute;left:674px;top:928.5px;width:535px;height:41px;background:#c8c8c8;border-top:1px solid #bdbdbd;border-bottom:1px solid #bdbdbd;box-sizing:border-box;"></div>
<svg style="position:absolute;left:690px;top:937px;" width="23" height="25" viewBox="0 0 23 25"><rect x="1" y="3" width="20.5" height="21" rx="2.5" fill="#1c1c1c"/><circle cx="11.2" cy="3" r="2.6" fill="#1c1c1c" stroke="#c8c8c8" stroke-width="1"/><path d="M5 11 H17.5 M5 15 H17.5 M5 19 H12.5" stroke="#d8d8d8" stroke-width="2"/></svg>
<div style="position:absolute;left:720.90px;top:938.22px;font-size:21px;line-height:21px;color:#1e1e1e;font-weight:normal;white-space:nowrap;transform:scaleX(0.9928);transform-origin:left 0;">Result</div>
<svg style="position:absolute;left:659px;top:1263px;" width="28" height="26" viewBox="0 0 28 26"><path d="M6.5 4 H20.5 Q23.5 4 23.5 7 V17" stroke="#111" stroke-width="2.4" fill="none"/><path d="M3 8.5 H18 Q19.5 8.5 19.5 10 V22.5 L16 19.5 H3 Q1.5 19.5 1.5 18 V10 Q1.5 8.5 3 8.5 Z" fill="none" stroke="#111" stroke-width="2.4"/></svg>
<svg style="position:absolute;left:1192px;top:1263px;" width="26" height="26" viewBox="0 0 26 26"><circle cx="12.6" cy="12.6" r="11.9" fill="#0a67c1"/><rect x="11.2" y="5.2" width="3" height="2.8" fill="#d6d6d6"/><rect x="11.2" y="10" width="3" height="10" fill="#d6d6d6"/></svg>
<div style="position:absolute;left:695px;top:637px;width:486px;height:275px;background:#2f2f2f;border-radius:13px;box-shadow:0 4px 22px rgba(0,0,0,0.6)"></div>
<div style="position:absolute;left:719.00px;top:680.68px;font-size:24px;line-height:24px;color:#f4f4f4;font-weight:bold;white-space:nowrap;">Share Command</div>
<svg style="position:absolute;left:1127px;top:680px;" width="25" height="25" viewBox="0 0 25 25"><path d="M4 4 L21.5 21.5 M21.5 4 L4 21.5" stroke="#ececec" stroke-width="3" stroke-linecap="round"/></svg>
<div style="position:absolute;left:719px;top:724.5px;width:438px;height:1.2px;background:#585858;"></div>
<div style="position:absolute;left:719px;top:749px;width:390px;height:52px;background:#4a4a4a;border-radius:6px 0 0 6px"></div>
<div style="position:absolute;left:1109px;top:749px;width:48px;height:52px;background:#1a5219;border-radius:0 6px 6px 0"></div>
<svg style="position:absolute;left:1121px;top:763px;" width="24" height="24" viewBox="0 0 24 24"><path d="M12 2 V22 M2 12 H22" stroke="#c9c9c9" stroke-width="2.4"/></svg>
<div style="position:absolute;left:731.00px;top:762.68px;font-size:24px;line-height:24px;color:#8e8e8e;font-weight:normal;white-space:nowrap;transform:scaleX(0.9957);transform-origin:left 0;">Add user e-mail address</div>
<div style="position:absolute;left:719.00px;top:825.28px;font-size:24px;line-height:24px;color:#d5221b;font-weight:normal;white-space:nowrap;">There is no user to share with</div></body></html>
